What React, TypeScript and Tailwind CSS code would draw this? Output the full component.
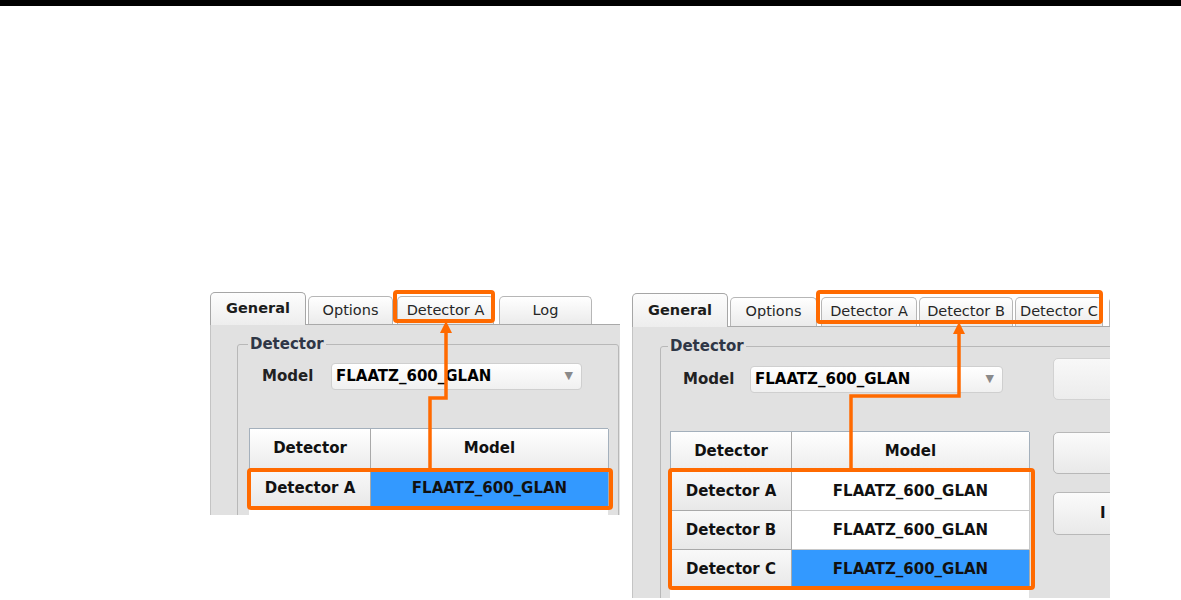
type TabProps = {
    label: string
    active?: boolean
    className: string
}

function Tab({ label, active, className }: TabProps) {
    if (active) {
        return (
            <div
                className={`${className} relative z-10 -mb-px flex shrink-0 items-center justify-center rounded-t-[5px] border border-b-0 border-[#a6a6a6] bg-linear-to-b from-[#fdfdfd] to-[#ededed] text-[14.5px] font-bold text-[#1c1c1c]`}
            >
                {label}
            </div>
        )
    }
    return (
        <div
            className={`${className} flex shrink-0 items-center justify-center rounded-t-[5px] border border-b-0 border-[#b6b6b6] bg-linear-to-b from-white to-[#ebebeb] text-[14.5px] text-[#262626]`}
        >
            {label}
        </div>
    )
}

type Row = {
    name: string
    model: string
    selected?: boolean
}

function DetectorTable({ rows }: { rows: Row[] }) {
    return (
        <div className="mt-[38px] h-[240px] w-[359px] bg-white">
            <div className="grid grid-cols-[121px_238px] border-l border-t border-[#a4b0bc]">
                <div className="flex h-[40px] items-center justify-center border-b border-r border-[#a9a9a9] bg-linear-to-b from-white to-[#ececec] text-[15px] font-bold text-[#111]">
                    Detector
                </div>
                <div className="flex h-[40px] items-center justify-center border-b border-r border-[#a4b0bc] bg-linear-to-b from-white to-[#ececec] text-[15px] font-bold text-[#111]">
                    Model
                </div>
                {rows.map((row) => (
                    <div key={row.name} className="contents">
                        <div className="flex h-[39px] items-center justify-center border-b border-r border-[#a9a9a9] bg-linear-to-b from-[#f9f9f9] to-[#e8e8e8] text-[15px] font-bold text-[#111]">
                            {row.name}
                        </div>
                        <div
                            className={
                                row.selected
                                    ? 'flex h-[39px] items-center justify-center border-b border-r border-[#a9a9a9] bg-[#3399ff] text-[15px] font-bold text-[#111]'
                                    : 'flex h-[39px] items-center justify-center border-b border-r border-[#c8c8c8] bg-white text-[15px] font-bold text-[#111]'
                            }
                        >
                            {row.model}
                        </div>
                    </div>
                ))}
            </div>
        </div>
    )
}

function ModelRow({ labelW, comboW }: { labelW: string; comboW: string }) {
    return (
        <div className="ml-[13px] flex items-center">
            <div className={`${labelW} text-[15px] font-bold text-[#222]`}>Model</div>
            <div
                className={`${comboW} flex h-[27px] items-center justify-between rounded-[4px] border border-[#cfcfcf] bg-linear-to-b from-white to-[#f0f0f0] pl-[4px] pr-[8px]`}
            >
                <span className="text-[15px] font-bold text-black">FLAATZ_600_GLAN</span>
                <span className="text-[11px] text-[#8a8a8a]">▼</span>
            </div>
        </div>
    )
}

function LeftShot() {
    return (
        <div className="flex h-[225px] w-[410px] flex-col overflow-hidden">
            <div className="flex h-[35px] shrink-0 items-end border-b border-[#a9a9a9] bg-white">
                <Tab label="General" active className="h-[33px] w-[96px]" />
                <Tab label="Options" className="ml-[2px] h-[28px] w-[85px]" />
                <Tab label="Detector A" className="ml-[4px] h-[28px] w-[97px]" />
                <Tab label="Log" className="ml-[5px] h-[28px] w-[93px]" />
            </div>
            <div className="flex-1 border-l border-[#c4c4c4] bg-[#e1e1e1] pl-[26px] pt-[10px]">
                <fieldset className="h-[260px] w-[382px] rounded-[3px] border border-[#b8b8b8] pl-[11px]">
                    <legend className="-ml-[1px] px-[2px] text-[15px] font-bold leading-[18px] text-[#2f3646]">Detector</legend>
                    <div className="mt-[10px]">
                        <ModelRow labelW="w-[69px]" comboW="w-[251px]" />
                    </div>
                    <DetectorTable rows={[{ name: 'Detector A', model: 'FLAATZ_600_GLAN', selected: true }]} />
                </fieldset>
            </div>
        </div>
    )
}

function RightShot() {
    return (
        <div className="flex h-[308px] w-[478px] flex-col overflow-hidden">
            <div className="flex h-[37px] shrink-0 items-end border-b border-[#a9a9a9] bg-white">
                <Tab label="General" active className="h-[34px] w-[96px]" />
                <Tab label="Options" className="ml-[2px] h-[29px] w-[87px]" />
                <Tab label="Detector A" className="ml-[4px] h-[29px] w-[96px]" />
                <Tab label="Detector B" className="ml-[2px] h-[29px] w-[94px]" />
                <Tab label="Detector C" className="ml-[2px] h-[29px] w-[88px]" />
                <Tab label="" className="ml-[6px] h-[29px] w-[40px]" />
            </div>
            <div className="flex-1 border-l border-[#c4c4c4] bg-[#e1e1e1] pl-[27px] pt-[10px]">
                <fieldset className="h-[320px] w-[520px] rounded-[3px] border border-[#b8b8b8] pl-[9px]">
                    <legend className="-ml-[2px] px-[2px] text-[15px] font-bold leading-[18px] text-[#2f3646]">Detector</legend>
                    <div className="flex">
                        <div className="w-[359px] shrink-0">
                            <div className="mt-[11px]">
                                <ModelRow labelW="w-[67px]" comboW="w-[253px]" />
                            </div>
                            <DetectorTable
                                rows={[
                                    { name: 'Detector A', model: 'FLAATZ_600_GLAN' },
                                    { name: 'Detector B', model: 'FLAATZ_600_GLAN' },
                                    { name: 'Detector C', model: 'FLAATZ_600_GLAN', selected: true },
                                ]}
                            />
                        </div>
                        <div className="ml-[24px] flex w-[100px] shrink-0 flex-col">
                            <div className="mt-[3px] h-[42px] rounded-[5px] border border-[#d2d2d2] bg-linear-to-b from-[#f8f8f8] to-[#ececec]" />
                            <div className="mt-[32px] h-[42px] rounded-[5px] border border-[#b8b8b8] bg-linear-to-b from-[#fbfbfb] to-[#e9e9e9]" />
                            <div className="mt-[18px] flex h-[43px] items-center rounded-[5px] border border-[#b8b8b8] bg-linear-to-b from-[#fbfbfb] to-[#e9e9e9] pl-[46px] text-[15px] font-bold text-[#111]">
                                I
                            </div>
                        </div>
                    </div>
                </fieldset>
            </div>
        </div>
    )
}

export default function App() {
    const orange = '#ff6a00'
    return (
        <div className="relative h-[600px] w-[1181px] overflow-hidden bg-white font-['DejaVu_Sans',sans-serif]">
            <div className="h-[6px] bg-black" />
            <div className="flex items-start gap-[12px] pl-[210px] pt-[284px]">
                <LeftShot />
                <RightShot />
            </div>
            <svg className="pointer-events-none absolute left-0 top-0" width="1181" height="600" viewBox="0 0 1181 600">
                <g fill="none" stroke={orange} strokeWidth="4">
                    <rect x="395" y="292" width="98" height="29" rx="2" />
                    <rect x="249" y="470" width="362" height="38" rx="2" />
                    <rect x="818" y="292" width="283" height="30" rx="2" />
                    <rect x="670" y="470" width="363" height="118" rx="2" />
                </g>
                <g fill="none" stroke={orange} strokeWidth="3.5">
                    <path d="M430 469 V398 H446 V330" />
                    <path d="M851 469 V396 H959 V330" />
                </g>
                <polygon points="446,321 440,333 452,333" fill={orange} />
                <polygon points="959,322 953,334 965,334" fill={orange} />
            </svg>
        </div>
    )
}
